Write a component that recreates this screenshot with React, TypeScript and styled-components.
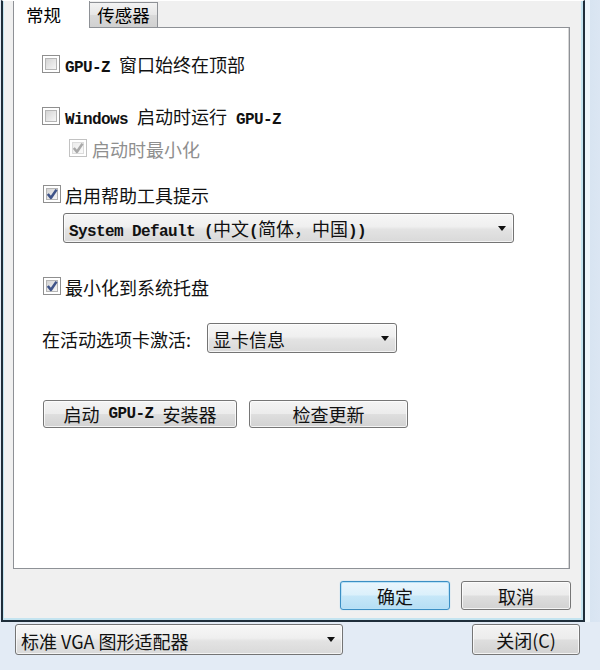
import React from "react";
import styled, { createGlobalStyle, css } from "styled-components";

const GlobalStyle = createGlobalStyle`
  html, body {
    margin: 0;
    padding: 0;
  }
  body {
    width: 600px;
    height: 670px;
    overflow: hidden;
    background: #e2eaf4;
    font-family: "Noto Sans CJK SC", "Noto Sans", sans-serif;
    font-size: 18px;
    color: #111;
  }
  * { box-sizing: border-box; }
`;

const Screen = styled.div`
  display: grid;
  grid-template-columns: 585px 15px;
  grid-template-rows: 622px 48px;
  width: 600px;
  height: 670px;
  background: #e2eaf4;
`;

const Dialog = styled.div`
  margin-left: 1px;
  display: flex;
  flex-direction: column;
  background: #f0f0f0;
  border-left: 2px solid #1f2e3a;
  border-right: 2px solid #1f2e3a;
  border-bottom: 2px solid #1f2e3a;
  box-shadow: inset 1px 0 0 #c4e4f0, inset -2px 0 0 #c4e4f0, inset 0 -2px 0 #c4e4f0;
  padding: 0 13px 0 10px;
  border-top: 1px solid #ffffff;
`;

const ParentEdge = styled.div`
  background: linear-gradient(to right, #eef6fb 0, #eef6fb 5px, #d8e4f1 5px, #dbe6f3 100%);
`;

const TabStrip = styled.div`
  display: flex;
  align-items: flex-end;
  height: 26px;
`;

const Tab = styled.div<{ $active?: boolean }>`
  display: flex;
  align-items: center;
  justify-content: center;
  font-size: 17.5px;
  line-height: 1;
  color: #000;
  ${(p) =>
    p.$active
      ? css`
          width: 77px;
          height: 27px;
          margin-bottom: -1px;
          padding-right: 16px;
          background: #fff;
          border-left: 1px solid #8e9196;
          border-right: 1px solid #8e9196;
          position: relative;
          z-index: 1;
        `
      : css`
          width: 68px;
          height: 25px;
          background: linear-gradient(#f3f3f3, #e6e6e6 50%, #d9d9d9 51%, #d1d1d1);
          border: 1px solid #8e9196;
          border-bottom: none;
          border-left: none;
        `}
`;

const Panel = styled.div`
  height: 542px;
  background: #fff;
  border: 1px solid #8e9196;
  box-shadow: inset -1px 0 0 #d6d6d6;
`;

const Content = styled.div`
  display: flex;
  flex-direction: column;
  align-items: flex-start;
  padding: 27px 0 0 28px;
`;

const Row = styled.div<{ $top?: number; $indent?: number; $gap?: number }>`
  display: flex;
  align-items: center;
  height: 18px;
  gap: ${(p) => p.$gap ?? 5}px;
  margin-top: ${(p) => p.$top ?? 0}px;
  margin-left: ${(p) => p.$indent ?? 0}px;
`;

const Label = styled.span<{ $disabled?: boolean }>`
  font-size: 18px;
  line-height: 1;
  white-space: pre;
  color: ${(p) => (p.$disabled ? "#8f8f8f" : "#111")};
  position: relative;
  top: 1px;
`;

const Mono = styled.span`
  font-family: "Liberation Mono", "Noto Sans CJK SC", monospace;
  font-size: 16px;
  letter-spacing: -0.6px;
  font-weight: bold;
`;

const BoxOuter = styled.span<{ $disabled?: boolean }>`
  position: relative;
  display: inline-block;
  width: 18px;
  height: 18px;
  flex: none;
  border: 1px solid ${(p) => (p.$disabled ? "#c2c2c2" : "#8f8f8f")};
  background: #fff;
  &::before {
    content: "";
    position: absolute;
    inset: 2px;
    border: 1px solid ${(p) => (p.$disabled ? "#dcdcdc" : "#b5b5b5")};
    background: ${(p) =>
      p.$disabled
        ? "linear-gradient(135deg, #ececec, #fafafa)"
        : "linear-gradient(135deg, #d4d4d4, #f6f6f6)"};
  }
  svg {
    position: absolute;
    left: 1px;
    top: 1px;
  }
`;

function CheckBox({ checked, disabled }: { checked?: boolean; disabled?: boolean }) {
  return (
    <BoxOuter $disabled={disabled}>
      {checked && (
        <svg width="14" height="14" viewBox="0 0 14 14">
          <path
            d="M2.8 7 L6 10.8 L11.5 2.6"
            fill="none"
            stroke={disabled ? "#a9a9a9" : "#3f5489"}
            strokeWidth="2.6"
            strokeLinejoin="round"
          />
        </svg>
      )}
    </BoxOuter>
  );
}

const Combo = styled.div<{ $width: number; $top?: number; $indent?: number; $height?: number }>`
  display: flex;
  align-items: center;
  justify-content: space-between;
  width: ${(p) => p.$width}px;
  height: ${(p) => p.$height ?? 30}px;
  margin-top: ${(p) => p.$top ?? 0}px;
  margin-left: ${(p) => p.$indent ?? 0}px;
  padding: 0 7px 0 5px;
  border: 1px solid #747474;
  border-radius: 3px;
  background: linear-gradient(#f7f7f7 0%, #efefef 45%, #e3e3e3 55%, #d9d9d9 100%);
  box-shadow: inset 0 0 0 1px rgba(255, 255, 255, 0.7);
  line-height: 1;
`;

const Arrow = styled.span`
  width: 0;
  height: 0;
  border-left: 4.5px solid transparent;
  border-right: 4.5px solid transparent;
  border-top: 5px solid #111;
  flex: none;
`;

const FieldRow = styled.div<{ $top?: number }>`
  display: flex;
  align-items: center;
  gap: 16px;
  margin-top: ${(p) => p.$top ?? 0}px;
`;

const ButtonRow = styled.div<{ $top?: number }>`
  display: flex;
  gap: 12px;
  margin-top: ${(p) => p.$top ?? 0}px;
  margin-left: 1px;
`;

const Button = styled.div<{ $width: number; $height?: number; $default?: boolean }>`
  display: flex;
  align-items: center;
  justify-content: center;
  width: ${(p) => p.$width}px;
  height: ${(p) => p.$height ?? 28}px;
  border: 1px solid #767676;
  border-radius: 3px;
  font-size: 18px;
  line-height: 1;
  color: #111;
  white-space: pre;
  background: linear-gradient(#f4f4f4 0%, #ececec 48%, #dedede 52%, #d2d2d2 100%);
  box-shadow: inset 0 0 0 1px rgba(255, 255, 255, 0.75);
  ${(p) =>
    p.$default &&
    css`
      border-color: #3b8fc4;
      background: linear-gradient(#eaf6fd 0%, #dbf0fb 48%, #c6e7f8 52%, #b5def4 100%);
      box-shadow: inset 0 0 0 1px #b9e2f7, 0 0 1px #6ec3ee;
    `}
`;

const Footer = styled.div`
  display: flex;
  justify-content: flex-end;
  gap: 11px;
  margin-top: 12px;
  margin-right: -1px;
`;

const ParentBar = styled.div`
  grid-column: 1 / -1;
  display: flex;
  align-items: flex-start;
  justify-content: space-between;
  padding: 2px 20px 0 15px;
  background: #e3ebf5;
`;

export default function App() {
  return (
    <>
      <GlobalStyle />
      <Screen>
        <Dialog>
          <TabStrip>
            <Tab $active>常规</Tab>
            <Tab>传感器</Tab>
          </TabStrip>
          <Panel>
            <Content>
              <Row>
                <CheckBox />
                <Label>
                  <Mono>GPU-Z </Mono>窗口始终在顶部
                </Label>
              </Row>
              <Row $top={34}>
                <CheckBox />
                <Label>
                  <Mono>Windows </Mono>启动时运行<Mono> GPU-Z</Mono>
                </Label>
              </Row>
              <Row $top={14} $indent={27}>
                <CheckBox checked disabled />
                <Label $disabled>启动时最小化</Label>
              </Row>
              <Row $top={28} $indent={1} $gap={4}>
                <CheckBox checked />
                <Label>启用帮助工具提示</Label>
              </Row>
              <Combo $width={451} $top={10} $indent={21}>
                <Label>
                  <Mono>System Default (</Mono>中文<Mono>(</Mono>简体，中国<Mono>))</Mono>
                </Label>
                <Arrow />
              </Combo>
              <Row $top={34} $indent={1} $gap={4}>
                <CheckBox checked />
                <Label>最小化到系统托盘</Label>
              </Row>
              <FieldRow $top={28}>
                <Label>在活动选项卡激活:</Label>
                <Combo $width={190} $height={30}>
                  <Label>显卡信息</Label>
                  <Arrow />
                </Combo>
              </FieldRow>
              <ButtonRow $top={47}>
                <Button $width={194}>
                  启动<Mono> GPU-Z </Mono>安装器
                </Button>
                <Button $width={159}>检查更新</Button>
              </ButtonRow>
            </Content>
          </Panel>
          <Footer>
            <Button $width={110} $height={29} $default>
              确定
            </Button>
            <Button $width={110} $height={29}>
              取消
            </Button>
          </Footer>
        </Dialog>
        <ParentEdge />
        <ParentBar>
          <Combo $width={328} $height={31}>
            <Label>标准 VGA 图形适配器</Label>
            <Arrow />
          </Combo>
          <Button $width={108} $height={31}>
            关闭(C)
          </Button>
        </ParentBar>
      </Screen>
    </>
  );
}
